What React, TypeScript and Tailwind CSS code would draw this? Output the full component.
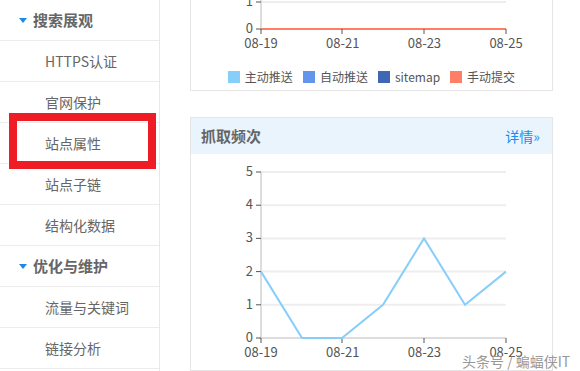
import React from "react";

const font = { fontFamily: '"Noto Sans CJK SC", "Noto Sans", sans-serif' };

function Tri() {
  return (
    <svg width="8" height="5" viewBox="0 0 8 5" className="mr-[6px]">
      <polygon points="0,0 8,0 4,5" fill="#1e88e5" />
    </svg>
  );
}

function Header({ label }: { label: string }) {
  return (
    <div className="h-[41px] flex items-center pl-[19px] border-b border-[#ececec]">
      <Tri />
      <span className="text-[15px] font-bold text-[#666]">{label}</span>
    </div>
  );
}

function Item({ label, marked }: { label: string; marked?: boolean }) {
  return (
    <div className="relative h-[41px] flex items-center pl-[45px] border-b border-[#ececec]">
      <span className="text-[14px] text-[#666]">{label}</span>
      {marked && (
        <div className="absolute left-[9px] top-[-10px] w-[147px] h-[56px] border-[8px] border-[#ee1c25]" />
      )}
    </div>
  );
}

const xs = [70, 111, 151, 192, 233, 274, 315];

function Chart1() {
  return (
    <svg width="361" height="60" className="block">
      <line x1="70" y1="2" x2="315" y2="2" stroke="#eeeeee" strokeWidth="2" />
      <line x1="70" y1="0" x2="70" y2="30" stroke="#dddddd" strokeWidth="2" />
      <line x1="65" y1="2" x2="70" y2="2" stroke="#555" strokeWidth="1" />
      <line x1="65" y1="29" x2="70" y2="29" stroke="#555" strokeWidth="1" />
      <line x1="70" y1="29" x2="315" y2="29" stroke="#ff7f66" strokeWidth="2" />
      {[70, 151, 233, 315].map((x) => (
        <line key={x} x1={x} y1="29" x2={x} y2="34" stroke="#555" strokeWidth="1" />
      ))}
      <text x="62" y="6" textAnchor="end" fontSize="13" fill="#555" style={font}>1</text>
      <text x="62" y="33" textAnchor="end" fontSize="13" fill="#555" style={font}>0</text>
      {["08-19", "08-21", "08-23", "08-25"].map((t, i) => (
        <text key={t} x={70 + i * 81.7} y="48" textAnchor="middle" fontSize="13" fill="#555" style={font}>{t}</text>
      ))}
    </svg>
  );
}

function Chart2() {
  const vals = [2, 0, 0, 1, 3, 1, 2];
  const y0 = 184;
  const step = 33.2;
  const pts = vals.map((v, i) => `${xs[i]},${y0 - v * step}`).join(" ");
  return (
    <svg width="361" height="216" className="block">
      {[1, 2, 3, 4, 5].map((v) => (
        <line key={v} x1="70" y1={y0 - v * step} x2="315" y2={y0 - v * step} stroke="#eeeeee" strokeWidth="2" />
      ))}
      <line x1="70" y1={y0 - 5 * step} x2="70" y2={y0 + 1} stroke="#dddddd" strokeWidth="2" />
      <line x1="70" y1={y0} x2="315" y2={y0} stroke="#dddddd" strokeWidth="2" />
      {[0, 1, 2, 3, 4, 5].map((v) => (
        <g key={v}>
          <line x1="65" y1={y0 - v * step} x2="70" y2={y0 - v * step} stroke="#555" strokeWidth="1" />
          <text x="62" y={y0 - v * step + 4} textAnchor="end" fontSize="13" fill="#555" style={font}>{v}</text>
        </g>
      ))}
      {[70, 151, 233, 315].map((x) => (
        <line key={x} x1={x} y1={y0} x2={x} y2={y0 + 5} stroke="#555" strokeWidth="1" />
      ))}
      <polyline points={pts} fill="none" stroke="#87cefa" strokeWidth="2" strokeLinejoin="miter" />
      {["08-19", "08-21", "08-23", "08-25"].map((t, i) => (
        <text key={t} x={70 + i * 81.7} y={y0 + 19} textAnchor="middle" fontSize="13" fill="#555" style={font}>{t}</text>
      ))}
    </svg>
  );
}

function Legend() {
  const items = [
    { c: "#87cefa", t: "主动推送" },
    { c: "#6495ed", t: "自动推送" },
    { c: "#3f67b3", t: "sitemap" },
    { c: "#ff7f66", t: "手动提交" },
  ];
  return (
    <div className="flex items-center justify-center gap-[10px] mt-[11px] h-[12px]">
      {items.map((i) => (
        <div key={i.t} className="flex items-center gap-[5px]">
          <div className="w-[12px] h-[12px]" style={{ backgroundColor: i.c }} />
          <span className="text-[12px] text-[#555] leading-none">{i.t}</span>
        </div>
      ))}
    </div>
  );
}

export default function App() {
  return (
    <div className="relative w-[580px] h-[371px] overflow-hidden bg-white flex" style={font}>
      <div className="w-[160px] shrink-0 border-r border-[#e8e8e8] flex flex-col">
        <Header label="搜索展观" />
        <Item label="HTTPS认证" />
        <Item label="官网保护" />
        <Item label="站点属性" marked />
        <Item label="站点子链" />
        <Item label="结构化数据" />
        <Header label="优化与维护" />
        <Item label="流量与关键词" />
        <Item label="链接分析" />
      </div>
      <div className="flex-1 pl-[30px] pr-[27px] flex flex-col">
        <div className="border-x border-b border-[#e5e5e5] h-[91px]">
          <Chart1 />
          <Legend />
        </div>
        <div className="mt-[26px] border border-[#e5e5e5] flex-1">
          <div className="h-[36px] bg-[#eaf4fd] flex items-center justify-between pl-[10px] pr-[12px]">
            <span className="text-[15px] font-bold text-[#666]">抓取频次</span>
            <span className="text-[14px] text-[#1a8cf0]">详情»</span>
          </div>
          <Chart2 />
        </div>
      </div>
      <div className="absolute left-[462px] top-[351px] text-[14px] text-[#999] whitespace-nowrap">
        头条号 / 蝙蝠侠IT
      </div>
    </div>
  );
}
